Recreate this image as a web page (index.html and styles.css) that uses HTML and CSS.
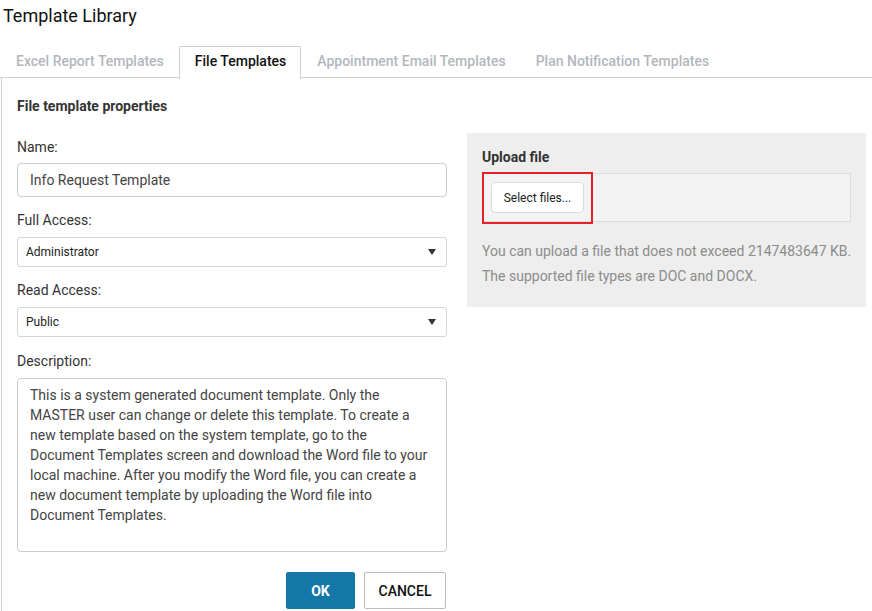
FILE: index.html
```html
<!DOCTYPE html>
<html>
<head>
<meta charset="utf-8">
<link rel="stylesheet" href="styles.css">
</head>
<body>
<h1 class="title">Template Library</h1>
<div class="tabs">
  <div class="tab">Excel Report Templates</div>
  <div class="tab active">File Templates</div>
  <div class="tab">Appointment Email Templates</div>
  <div class="tab">Plan Notification Templates</div>
</div>
<div class="content">
  <h2 class="section-title">File template properties</h2>
  <div class="columns">
    <div class="form">
      <label class="label label-first">Name:</label>
      <div class="input">Info Request Template</div>
      <label class="label">Full Access:</label>
      <div class="select"><span>Administrator</span><span class="caret"></span></div>
      <label class="label">Read Access:</label>
      <div class="select"><span>Public</span><span class="caret"></span></div>
      <label class="label label-desc">Description:</label>
      <div class="textarea">This is a system generated document template. Only the MASTER user can change or delete this template. To create a new template based on the system template, go to the Document Templates screen and download the Word file to your local machine. After you modify the Word file, you can create a new document template by uploading the Word file into Document Templates.</div>
      <div class="actions">
        <button class="btn btn-primary">OK</button>
        <button class="btn btn-default">CANCEL</button>
      </div>
    </div>
    <div class="upload-panel">
      <div class="upload-title">Upload file</div>
      <div class="dropzone">
        <button class="select-btn">Select files...</button>
        <div class="highlight"></div>
      </div>
      <p class="hint">You can upload a file that does not exceed 2147483647 KB.<br>The supported file types are DOC and DOCX.</p>
    </div>
  </div>
</div>
</body>
</html>
```
FILE: styles.css
```css
* { box-sizing: border-box; }
html, body {
  margin: 0;
  padding: 0;
  background: #fff;
  font-family: Roboto, "Liberation Sans", Arial, sans-serif;
  color: #333;
}
.title {
  margin: 0;
  padding: 4px 3px 0;
  font-size: 18px;
  line-height: 24px;
  font-weight: 400;
  color: #111;
}
.tabs {
  display: flex;
  margin-top: 18px;
  height: 32px;
  border-bottom: 1px solid #cfcfcf;
}
.tab {
  height: 32px;
  padding: 0 14px 0 15px;
  line-height: 28px;
  border: 1px solid transparent;
  border-bottom: none;
  font-size: 14px;
  font-weight: 500;
  color: #b3b7bd;
  white-space: nowrap;
  background: transparent;
  border-radius: 2px 2px 0 0;
}
.tab:nth-child(3) { padding-right: 13px; }
.tab.active {
  border-color: #cfcfcf;
  background: #fff;
  color: #111;
  height: 33px;
}
.content {
  margin-left: 1px;
  border-left: 1px solid #cfcfcf;
  padding: 18px 6px 0 15px;
  height: 534px;
}
.section-title {
  margin: 0;
  font-size: 14px;
  line-height: 20px;
  font-weight: 700;
  color: #333;
}
.columns {
  display: flex;
  gap: 20px;
  margin-top: 17px;
}
.form {
  flex: 0 0 430px;
  width: 430px;
  display: flex;
  flex-direction: column;
}
.label {
  display: block;
  font-size: 14px;
  line-height: 20px;
  color: #333;
  margin-top: 13px;
  margin-bottom: 7px;
}
.label-first { margin-top: 4px; margin-bottom: 6px; }
.label-desc { margin-top: 14px; }
.input {
  height: 34px;
  border: 1px solid #ccc;
  border-radius: 4px;
  padding: 0 12px;
  font-size: 14px;
  line-height: 32px;
  color: #444;
}
.select {
  height: 30px;
  border: 1px solid #d6d6d6;
  border-radius: 3px;
  padding: 0 10px 0 8px;
  font-size: 12px;
  line-height: 28px;
  color: #222;
  display: flex;
  justify-content: space-between;
  align-items: center;
}
.caret {
  width: 0;
  height: 0;
  border-left: 4px solid transparent;
  border-right: 4px solid transparent;
  border-top: 6px solid #333;
}
.textarea {
  height: 174px;
  border: 1px solid #ccc;
  border-radius: 4px;
  padding: 6px 12px;
  font-size: 14px;
  line-height: 20px;
  color: #444;
}
.actions {
  display: flex;
  justify-content: flex-end;
  gap: 9px;
  margin-top: 20px;
  padding-right: 1px;
}
.btn {
  height: 37px;
  font-family: Roboto, "Liberation Sans", Arial, sans-serif;
  font-size: 14px;
  border-radius: 2px;
  cursor: pointer;
}
.btn-primary {
  width: 69px;
  background: #1378a8;
  border: 1px solid #1378a8;
  color: #fff;
  font-weight: 700;
}
.btn-default {
  width: 82px;
  background: #fff;
  border: 1px solid #bdbdbd;
  color: #111;
  font-weight: 500;
}
.upload-panel {
  flex: 1 1 auto;
  height: 174px;
  background: #eeeeee;
  padding: 14px 15px 0;
}
.upload-title {
  font-size: 14px;
  line-height: 20px;
  font-weight: 700;
  color: #333;
}
.dropzone {
  position: relative;
  margin-top: 6px;
  height: 49px;
  background: #f3f3f3;
  border: 1px solid #dcdcdc;
  padding: 8px;
}
.select-btn {
  height: 31px;
  width: 93px;
  background: #fff;
  border: 1px solid #dcdcdc;
  border-radius: 4px;
  font-family: Roboto, "Liberation Sans", Arial, sans-serif;
  font-size: 12px;
  color: #222;
  padding: 0;
}
.highlight {
  position: absolute;
  left: -1px;
  top: -2px;
  width: 111px;
  height: 52px;
  border: 2px solid #e8202a;
  pointer-events: none;
}
.hint {
  margin: 17px 0 0;
  font-size: 14px;
  line-height: 25px;
  color: #8c8c8c;
  white-space: nowrap;
}
```
